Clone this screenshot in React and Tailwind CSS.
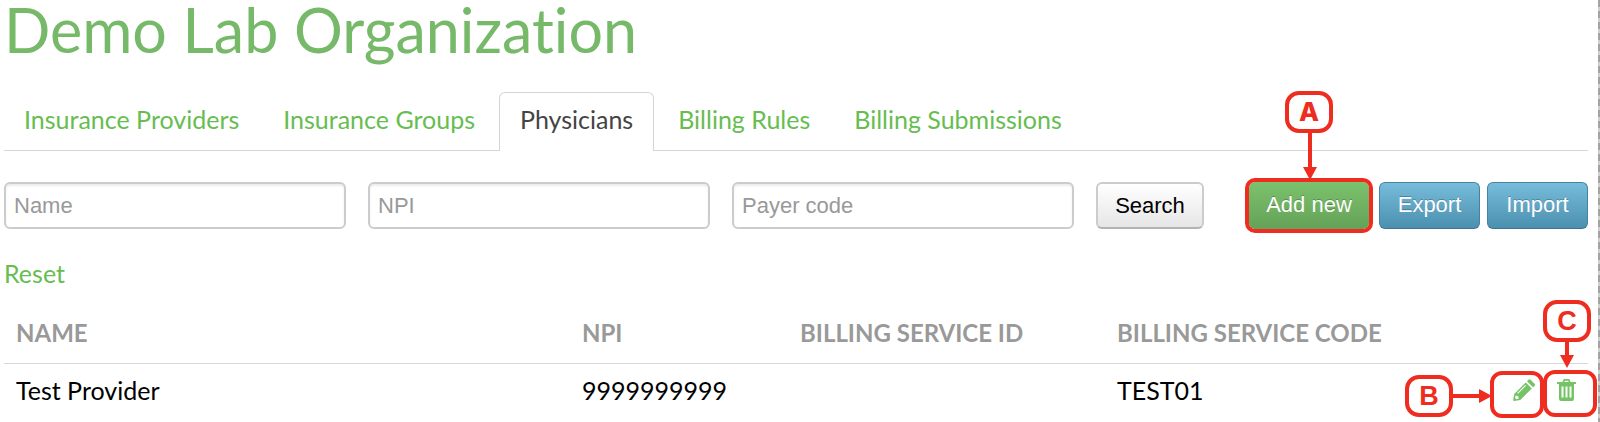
const tabs = [
  { label: "Insurance Providers" },
  { label: "Insurance Groups" },
  { label: "Physicians", active: true },
  { label: "Billing Rules" },
  { label: "Billing Submissions" },
];

const filters = ["Name", "NPI", "Payer code"];

const blueButton =
  "h-[47px] w-[101px] pb-0.5 rounded-md border border-[#4384a0] border-b-[#3a7691] bg-linear-to-b from-[#78bcdb] to-[#4c90b0] text-white text-[22px] leading-6 text-shadow-[0_-1px_0_rgba(0,0,0,0.25)]";

const PencilIcon = () => (
  <svg viewBox="0 0 22 22" className="size-[22px]" fill="#74c365">
    <path d="M14 2.200 15.400.8q1-1 2.100 0l4 4q1 1 0 2.100L20.100 8.300z" />
    <path
      fillRule="evenodd"
      d="M12.700 3.500 18.800 9.600 7.300 21 1 22Q0 22 .2 21L1.200 15zM12.200 5.900 4.200 13.900 5 14.700 13 6.700zM2.600 16.600 2.100 19 3.300 20.200 5.700 19.700 5.200 17.200z"
    />
  </svg>
);

const TrashIcon = () => (
  <svg viewBox="0 0 19 22" className="w-[19px] h-[22px]" fill="#74c365">
    <path
      fillRule="evenodd"
      d="M5.500 3 6.200.9Q6.500 0 7.400 0h4.200q.9 0 1.200.9l.7 2.100H18.500q.5 0 .5.5v1q0 .5-.5.5H17v14.500q0 2.500-2 2.500H4q-2 0-2-2.500V5H.5Q0 5 0 4.500v-1Q0 3 .5 3zM7.300 3h4.400l-.5-1.300H7.800zM4.500 7.500v11h2v-11zM8.500 7.500v11h2v-11zM12.500 7.500v11h2v-11z"
    />
  </svg>
);

const Badge = ({ letter, className }) => (
  <span
    className={`absolute flex items-center justify-center border-4 border-[#ee2d20] rounded-[14px] bg-white text-[#ee2d20] leading-7 ${className}`}
  >
    {letter}
  </span>
);

const ArrowDown = ({ length, className }) => (
  <svg width="14" height={length} className={`absolute ${className}`} fill="#ee2d20">
    <path d={`M5 0h4v${length - 13}h5L7 ${length} 0 ${length - 13}h5z`} />
  </svg>
);

const ArrowRight = ({ length, className }) => (
  <svg width={length} height="14" className={`absolute ${className}`} fill="#ee2d20">
    <path d={`M0 5v4h${length - 13}v5L${length} 7 ${length - 13} 0v5z`} />
  </svg>
);

const App = () => {
  return (
    <div className="relative min-h-[422px] bg-white pl-1 pr-3 font-[Lato,sans-serif] text-[25px] leading-9 text-black">
      <h1 className="text-[61px] leading-[60px] text-[#75b969] [font-variant-ligatures:none]">
        Demo Lab Organization
      </h1>

      <nav className="mt-8 flex gap-1 border-b border-[#d5d5d5]">
        {tabs.map((tab) => (
          <a
            key={tab.label}
            href="#"
            className={
              tab.active
                ? "-mb-px h-[59px] px-5 pt-2 rounded-t-md border border-b-0 border-[#d5d5d5] bg-white text-[#444]"
                : "h-[58px] px-5 pt-[9px] text-[#66bd50]"
            }
          >
            {tab.label}
          </a>
        ))}
      </nav>

      <form className="mt-[31px] flex items-center font-['Liberation_Sans',sans-serif]">
        <div className="flex grow gap-[22px]">
          {filters.map((name) => (
            <input
              key={name}
              type="text"
              aria-label={name}
              placeholder={name}
              className="h-[47px] min-w-0 flex-1 px-2 rounded-md border-2 border-[#ccc] text-[22px] shadow-[inset_0_2px_2px_rgba(0,0,0,0.08)] placeholder:text-[#999]"
            />
          ))}
          <button
            type="button"
            className="h-[47px] w-[108px] rounded-md border-2 border-[#ccc] border-b-[#b3b3b3] bg-linear-to-b from-white to-[#e6e6e6] text-[22px]"
          >
            Search
          </button>
        </div>
        <button
          type="button"
          className="ml-[45px] h-[47px] w-[120px] pb-0.5 rounded-md bg-linear-to-b from-[#7cc26e] to-[#64a257] text-white text-[22px] leading-6 outline-4 outline-[#ee2d20] text-shadow-[0_-1px_0_rgba(0,0,0,0.25)]"
        >
          Add new
        </button>
        <div className="ml-2.5 flex gap-[7px]">
          <button type="button" className={blueButton}>Export</button>
          <button type="button" className={blueButton}>Import</button>
        </div>
      </form>

      <a href="#" className="mt-[26px] block text-[#66bd50]">Reset</a>

      <table className="mt-6 w-full table-fixed text-left">
        <thead>
          <tr className="border-b border-[#d8d8d8] text-2xl leading-9 text-[#999]">
            <th className="w-[566px] px-3 pb-3">NAME</th>
            <th className="w-[218px] px-3 pb-3">NPI</th>
            <th className="w-[317px] px-3 pb-3">BILLING SERVICE ID</th>
            <th className="px-3 pb-3">BILLING SERVICE CODE</th>
            <th className="w-[92px]" aria-label="Actions" />
          </tr>
        </thead>
        <tbody>
          <tr>
            <td className="px-3 pt-2">Test Provider</td>
            <td className="px-3 pt-2">9999999999</td>
            <td />
            <td className="px-3 pt-2">TEST01</td>
            <td className="pr-3 pt-2">
              <div className="flex items-center justify-end gap-[22px]">
                <button type="button" aria-label="Edit"><PencilIcon /></button>
                <button type="button" aria-label="Delete"><TrashIcon /></button>
              </div>
            </td>
          </tr>
        </tbody>
      </table>

      {/* callouts */}
      <Badge letter="A" className="right-[267px] top-[91px] h-[42px] w-12 font-[Inter,sans-serif] text-[26px] font-extrabold" />
      <ArrowDown length={48} className="right-[283px] top-[132px]" />
      <Badge letter="B" className="right-[147px] top-[375px] h-[42px] w-12 font-['Liberation_Sans',sans-serif] text-[27px] font-bold" />
      <ArrowRight length={40} className="right-[108px] top-[389px]" />
      <Badge letter="C" className="right-[9px] top-[300px] h-[42px] w-12 font-['Liberation_Sans',sans-serif] text-[27px] font-bold" />
      <ArrowDown length={27} className="right-[26px] top-[341px]" />
      <div className="absolute right-[56px] top-[371px] h-[47px] w-[54px] rounded-xl border-4 border-[#ee2d20]" />
      <div className="absolute right-[3px] top-[370px] h-[47px] w-[54px] rounded-xl border-4 border-[#ee2d20]" />
      <div className="absolute inset-y-0 right-0 w-0.5 bg-[repeating-linear-gradient(to_bottom,#a3a3a3_0_7px,#cfcfcf_7px_11px)]" />
    </div>
  );
};

export default App;
